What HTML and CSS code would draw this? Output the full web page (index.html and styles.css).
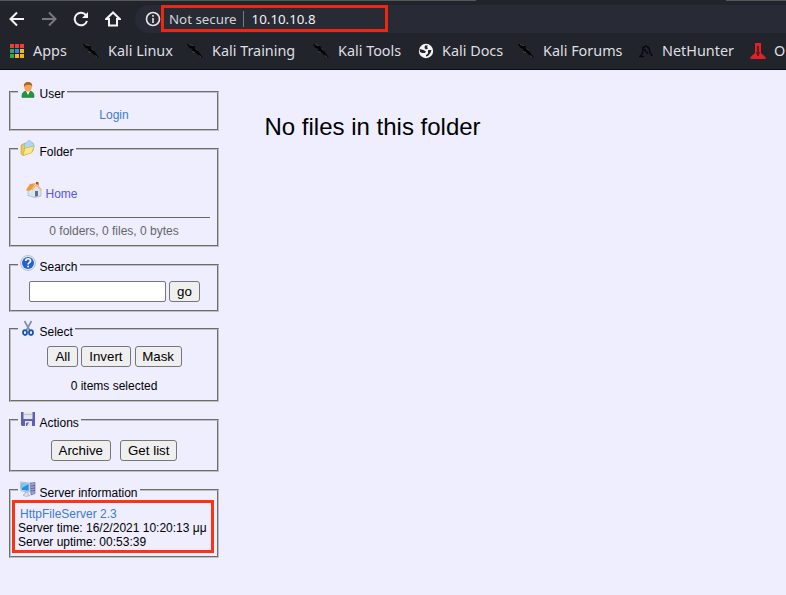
FILE: index.html
```html
<!DOCTYPE html>
<html lang="en">
<head>
<meta charset="utf-8">
<title>HFS /</title>
<link rel="stylesheet" href="styles.css">
</head>
<body>
<svg width="0" height="0" class="defs">
  <symbol id="dragon" viewBox="0 0 16 16">
    <path fill="#050506" d="M0 1l3 .3 3 1.500 2 .7 2 3 2 2.500 1.500 2.500 2.500 3-2.500-.5-3-2.500-1.500-1.500-2.500-1-2-1.800 1.500-.7L2 4.500z"/>
    <path stroke="#66676b" stroke-width=".6" fill="none" d="M2 1.500l4 1.200M8 4.500l2.500 3M5 8.500l3 1M12 12.500l2 1.500"/>
  </symbol>
</svg>
<header class="browser">
  <div class="tabstrip"><i></i><i></i></div>
  <div class="toolbar">
    <svg class="nav" viewBox="0 0 16 16"><path d="M15 8H2M8 1.500L1.500 8 8 14.500"/></svg>
    <svg class="nav dim" viewBox="0 0 16 16"><path d="M1 8h13M8 1.500L14.500 8 8 14.500"/></svg>
    <svg class="nav" viewBox="0 0 16 16"><path d="M13.300 4.600A6.300 6.300 0 1 0 14 10"/><path class="solid" d="M15 1v6H9z"/></svg>
    <svg class="nav" viewBox="0 0 16 16"><path d="M8 1.500L1.300 8H4v6.500h8V8h2.700z"/></svg>
    <div class="omnibox">
      <svg class="info" viewBox="0 0 16 16"><circle cx="8" cy="8" r="6.500"/><path d="M8 7v5M8 4v1.700"/></svg>
      <div class="address"><span>Not secure</span><b></b><span class="host">10.10.10.8</span></div>
    </div>
  </div>
  <nav class="bookmarks">
    <a><svg viewBox="0 0 16 16"><path fill="#f23c36" d="M0 1h4v4H0zM5 1h4v4H5zM10 1h4v4h-4z"/><path fill="#34a455" d="M0 6h4v4H0zM0 11h4v4H0z"/><path fill="#2a84ea" d="M5 6h4v4H5z"/><path fill="#f5b51b" d="M10 6h4v4h-4zM5 11h4v4H5zM10 11h4v4h-4z"/></svg><span>Apps</span></a>
    <a><svg><use href="#dragon"/></svg><span>Kali Linux</span></a>
    <a><svg><use href="#dragon"/></svg><span>Kali Training</span></a>
    <a><svg><use href="#dragon"/></svg><span>Kali Tools</span></a>
    <a><svg viewBox="0 0 16 16"><circle cx="8" cy="8" r="7.200" fill="#f4f4f4"/><path fill="#22242c" d="M1.500 6l4 1 2.500 1.500-1 1.500H4L2 9zM7 2.500l3 0-1 1.500 1 1.500-2 1-1.500-1.500zM10 7l3.500 0-1 3-2.500 3-2 .5 0-1.500 2-1.500z"/></svg><span>Kali Docs</span></a>
    <a><svg><use href="#dragon"/></svg><span>Kali Forums</span></a>
    <a><svg viewBox="0 0 16 16"><path fill="none" stroke="#08090b" stroke-width="1.500" d="M2 13.500l2.500-3 .5-6 3-1.500 3 2 1 5 2.500 3M6 6l4 5M1 13.500h5"/></svg><span>NetHunter</span></a>
    <a><svg viewBox="0 0 16 16"><path fill="#e02228" d="M5 0h6v10l4.500 4v2H.5v-2L5 10z"/><path fill="#68191d" d="M7 3h2v5l1 3H9v2H7v-2H6l1-3z"/></svg><span>O</span></a>
  </nav>
</header>
<main class="page">
  <aside class="side">
    <section class="panel user">
      <h2><svg viewBox="0 0 16 16"><path fill="#25943a" stroke="#1a7631" stroke-width=".5" d="M2 15.500c-.5-4 1-6 4-6.500h4c3 .5 4.500 2.500 4 6.500z"/><path fill="#fff" d="M6 9h4l-2 4z"/><ellipse cx="8" cy="5" rx="3.800" ry="4.500" fill="#eda65b"/><path fill="#b4671b" d="M4 5c-.5-3 1-5 4-5s5 2 4 5l-1-2H6z"/></svg>User</h2>
      <a class="login">Login</a>
    </section>
    <section class="panel folder">
      <h2><svg viewBox="0 0 16 16"><path fill="#ecc955" stroke="#ae913a" stroke-width=".5" d="M1 5l4-2 2 1 6-1v8L3 15.500 1 14z"/><path fill="#acd8f6" stroke="#75acd3" stroke-width=".5" d="M4 5l5-5 5 4-1 6-7 1z"/><path fill="#fae788" stroke="#bba03b" stroke-width=".5" d="M5 8l9.500-2-3 7L3 15.500z"/></svg>Folder</h2>
      <a class="home"><svg viewBox="0 0 16 16"><path fill="#c44132" d="M10 0h2.500v5H10z"/><path fill="#d8e5f1" stroke="#8c9dad" stroke-width=".5" d="M7 6l4-4 4 5v7l-6 1.500-7-2V8z"/><path fill="#ef9a36" d="M0 8l4-6 6-1-5 7-3 1z"/><path fill="none" stroke="#f6ba6c" stroke-width="1.300" d="M6 8l4-5 5 5"/><path fill="#5d7191" d="M9 9h3v5l-3 .8z"/></svg>Home</a>
      <p class="stats">0 folders, 0 files, 0 bytes</p>
    </section>
    <section class="panel search">
      <h2><svg viewBox="0 0 16 16"><circle cx="8" cy="8" r="7.500" fill="#e6eaf2" stroke="#a3acbb" stroke-width=".7"/><circle cx="8" cy="8" r="6" fill="#2462cc"/><path fill="none" stroke="#fff" stroke-width="1.700" d="M5.700 6c0-3 4.800-3 4.800 0 0 1.700-2.400 1.500-2.400 3.500M8.100 10.700v1.600"/></svg>Search</h2>
      <div class="row"><input type="text"><button>go</button></div>
    </section>
    <section class="panel select">
      <h2><svg viewBox="0 0 16 16"><path fill="none" stroke="#8492a3" stroke-width="1.700" d="M4.500 1L10 11M11.500 1L6 11"/><g fill="none" stroke="#1557b5" stroke-width="1.800"><ellipse cx="5" cy="12.600" rx="2" ry="2.400"/><ellipse cx="11" cy="12.600" rx="2" ry="2.400"/></g></svg>Select</h2>
      <div class="row"><button>All</button><button>Invert</button><button class="mask">Mask</button></div>
      <p>0 items selected</p>
    </section>
    <section class="panel actions">
      <h2><svg viewBox="0 0 16 16"><path fill="#5e5fb8" d="M1 1h14v14H2l-1-1z"/><path fill="#e6e6ea" d="M3.500 1h9v7h-9zM5 10h7v5H5z"/><path fill="#c3c3cc" d="M4 3h8v1H4z"/><path fill="#6767ae" d="M6 15v-3l3-1-2 4z"/></svg>Actions</h2>
      <div class="row"><button>Archive</button><button>Get list</button></div>
    </section>
    <section class="panel server">
      <h2><svg viewBox="0 0 16 16"><path fill="#9da4d2" stroke="#5c6193" stroke-width=".6" d="M10 2l5-.5v11L11 14z"/><path stroke="#444b7c" stroke-width=".7" d="M11 5l4-.5M11 7.500l4-.5M11 10l4-.5"/><path fill="#dce3ef" stroke="#8796ae" stroke-width=".5" d="M0 1l10 1v9L1 10zM5 11l3 .5v2l2 1-4 1-3-1.500 2-1z"/><path fill="#2391df" d="M1.300 2.300l7.400.7v6.700l-7-.7z"/><path fill="#7bcaf4" d="M1.300 2.300l7.400.7-6.800 4z"/></svg>Server information</h2>
      <div class="details"><a>HttpFileServer 2.3</a><span>Server time: 16/2/2021 10:20:13 μμ</span><span>Server uptime: 00:53:39</span></div>
    </section>
  </aside>
  <h1>No files in this folder</h1>
</main>
</body>
</html>
```
FILE: styles.css
```css
* { box-sizing: border-box; }
body { margin: 0; height: 595px; overflow: hidden; background: #eeeeff; color: #000; font: 12px/14px "Liberation Sans", Arial, sans-serif; }
.defs { position: absolute; }
h1, h2, p { margin: 0; font-weight: normal; }
.browser { height: 70px; background: #22242c; border-bottom: 1px solid #0c0d12; font-family: "Noto Sans", sans-serif; overflow: hidden; }
.tabstrip { display: flex; justify-content: space-between; height: 5px; }
.tabstrip i { width: 476px; height: 1px; background: #55575b; }
.tabstrip i + i { width: 60px; }
.toolbar { display: flex; align-items: center; height: 28px; padding-left: 9px; gap: 16px; }
.nav { width: 16px; height: 16px; flex: none; fill: none; stroke: #f4f4f4; stroke-width: 2; }
.nav.dim { stroke: #77797e; }
.nav .solid { fill: #f4f4f4; stroke: none; }
.omnibox { display: flex; align-items: center; flex: 1; height: 28px; margin-left: -2px; padding-left: 10px; background: #282a35; border-radius: 14px 0 0 14px; }
.info { width: 16px; height: 16px; fill: none; stroke: #e7e8ea; stroke-width: 1.600; }
.address { display: flex; align-items: center; width: 227px; height: 27px; margin-top: -1px; padding: 1px 0 0 5px; border: 3px solid #e92a10; color: #d4d5d8; font-size: 13.300px; line-height: 20px; }
.address b { width: 1px; height: 16px; margin: 0 8px 0 6px; background: #777980; }
.host { color: #f2f2f2; }
.bookmarks { display: grid; grid-template-columns: 73px 104px 126px 105px 100px 120px 112px 160px; padding-left: 10px; height: 35px; align-items: center; font-size: 14.400px; line-height: 20px; color: #dedfe1; }
.bookmarks a { display: flex; align-items: center; gap: 9px; white-space: nowrap; }
.bookmarks a:first-child { gap: 7px; }
.bookmarks a:nth-child(5) { gap: 8px; }
.bookmarks a:nth-child(7) { gap: 8px; }
.bookmarks a:last-child { gap: 8px; }
.bookmarks svg { width: 16px; height: 16px; flex: none; }
.page { display: flex; align-items: flex-start; }
.side { width: 210px; margin: 21px 0 0 9px; flex: none; }
.panel { height: 40px; margin-bottom: 17px; border: 2px groove #c0c0c0; padding: 0 7px; text-align: center; }
.panel h2 { display: flex; align-items: flex-end; gap: 3.500px; width: fit-content; height: 20px; margin-top: -11px; margin-bottom: -1px; padding: 0 2px; background: #eeeeff; font-size: 12px; line-height: 15px; position: relative; }
.panel h2 svg { width: 16px; height: 16px; margin-bottom: 4px; }
.panel a { color: #407bd0; }
.login { display: block; margin-top: 7px; }
.folder { height: 99px; }
.folder h2, .select h2, .actions h2, .server h2 { margin-top: -10px; }
.home { display: flex; align-items: flex-end; gap: 3.500px; margin: 23px 0 0 8px; }
.panel .home { color: #5753f4; }
.home svg { width: 16px; height: 16px; margin-bottom: 3px; }
.stats { margin-top: 16px; padding-top: 6px; border-top: 1px solid #666; color: #666; }
.search { height: 48px; }
.row { display: flex; justify-content: center; gap: 3px; margin-top: 7px; }
button { height: 21px; padding: 0 7px; border: 1px solid #767676; border-radius: 3px; background: #efefef; color: #000; font: 13.333px/18px "Liberation Sans", sans-serif; }
.search button { width: 31px; margin-right: -1px; }
.mask { width: 47px; margin-left: 1px; margin-right: -1px; padding: 0; }
input { width: 137px; height: 21px; border: 1px solid #767676; border-radius: 2px; background: #fff; }
.select { height: 74px; margin-top: -1px; }
.select p { margin-top: 12px; }
.actions { height: 53px; }
.actions h2 { margin-bottom: -2px; }
.actions .row { gap: 9px; margin-top: 11px; }
.server { height: 69px; }
.details { display: flex; flex-direction: column; height: 53px; width: 202px; margin: 0 0 0 -6px; padding: 4px 0 0 3px; border: 3px solid #fb3512; text-align: left; white-space: nowrap; position: relative; }
.details a { margin-left: 2px; }
h1 { margin: 43px 0 0 45.500px; font-size: 24px; line-height: 28px; }
```
